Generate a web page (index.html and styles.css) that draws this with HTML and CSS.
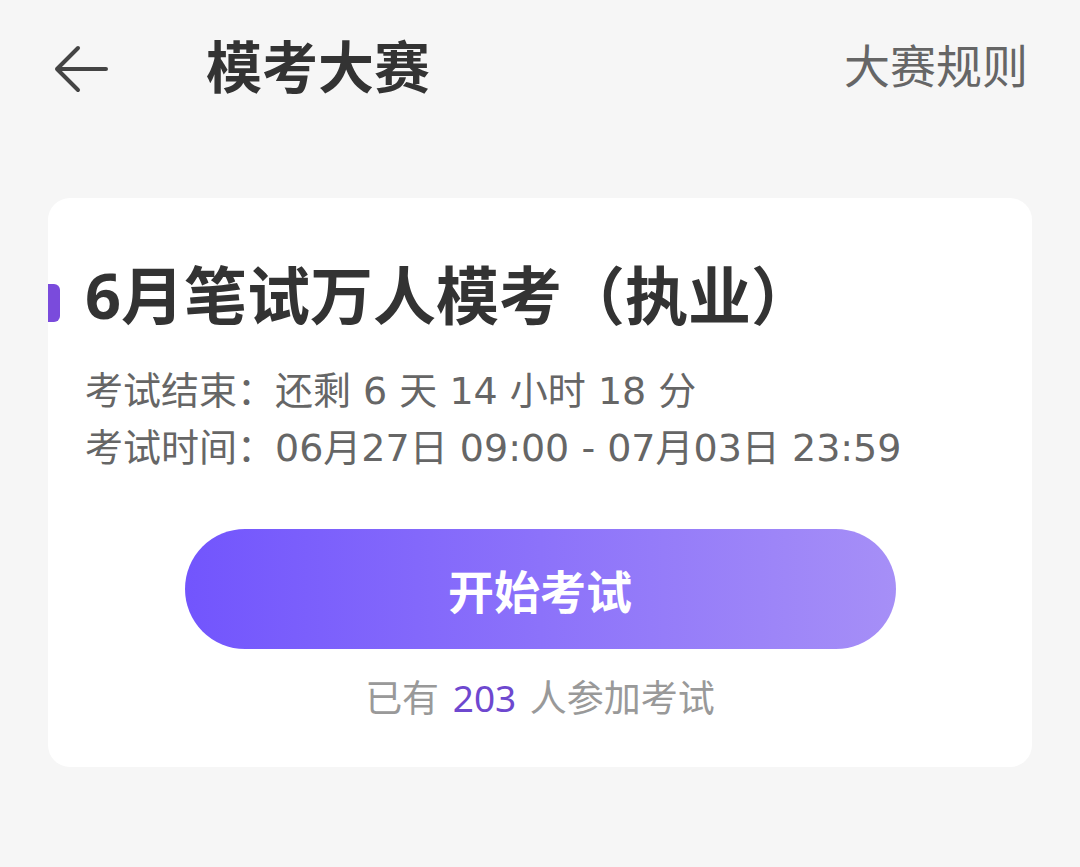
FILE: index.html
```html
<!DOCTYPE html>
<html>

<head>
    <meta charset="UTF-8">
    <meta name="viewport" content="width=device-width, initial-scale=1.0">
    <title>模考大赛</title>
    <link rel="stylesheet" href="styles.css">
</head>

<body>
    <div class="header">
        <div class="back">
            <svg width="56" height="52" viewBox="0 0 56 52">
                <path d="M53 26 H4 M25 5 L4 26 L25 47" fill="none" stroke="#444" stroke-width="4" stroke-linecap="round" stroke-linejoin="round" />
            </svg>
        </div>
        <div class="title">模考大赛</div>
        <div class="rules">大赛规则</div>
    </div>

    <div class="card">
        <div class="card-title">
            <span class="mark"></span>
            <h2>6月笔试万人模考（执业）</h2>
        </div>
        <div class="info">
            <p>考试结束：还剩 6 天 14 小时 18 分</p>
            <p>考试时间：06月27日 09:00 - 07月03日 23:59</p>
        </div>
        <div class="action">
            <button class="start">开始考试</button>
            <p class="count">已有 <span>203</span> 人参加考试</p>
        </div>
    </div>
</body>

</html>
```

FILE: styles.css
```css
body {
    margin: 0;
    font-family: "Noto Sans", "Noto Sans CJK SC", sans-serif;
    background-color: #f6f6f6;
    width: 1080px;
    height: 867px;
}

.header {
    display: flex;
    align-items: center;
    height: 136px;
    padding: 0 52px 0 53px;
}

.back {
    display: flex;
    width: 56px;
    height: 52px;
    margin-top: 2px;
}

.title {
    margin-left: 97px;
    margin-top: -4px;
    font-size: 56px;
    font-weight: 700;
    color: #333;
    line-height: 1;
}

.rules {
    margin-left: auto;
    font-size: 46px;
    color: #666;
    line-height: 1;
    margin-top: -6px;
}

.card {
    margin: 62px 48px 0;
    padding: 55px 0 41px;
    background-color: white;
    border-radius: 22px;
}

.card-title {
    display: flex;
    align-items: center;
}

.card-title .mark {
    width: 12px;
    height: 38px;
    margin-top: 16px;
    margin-right: 25px;
    background-color: #7a4bdc;
    border-radius: 0 6px 6px 0;
}

.card-title h2 {
    margin: 0;
    font-size: 63px;
    line-height: 84px;
    font-weight: 700;
    color: #333;
}

.info {
    margin-top: 26px;
    padding-left: 37px;
}

.info p {
    margin: 0;
    font-family: "DejaVu Sans", "Noto Sans CJK SC", sans-serif;
    font-size: 38px;
    line-height: 57px;
    color: #666;
}

.action {
    display: flex;
    flex-direction: column;
    align-items: center;
    margin-top: 52px;
}

.start {
    width: 711px;
    height: 120px;
    border: none;
    border-radius: 60px;
    background: linear-gradient(90deg, #7255fd, #a68ff7);
    color: white;
    font-family: inherit;
    font-size: 46px;
    font-weight: 700;
    cursor: pointer;
}

.count {
    margin: 20px 0 0;
    font-size: 37px;
    line-height: 57px;
    color: #999;
    word-spacing: 4px;
}

.count span {
    color: #6e48cf;
}
```
